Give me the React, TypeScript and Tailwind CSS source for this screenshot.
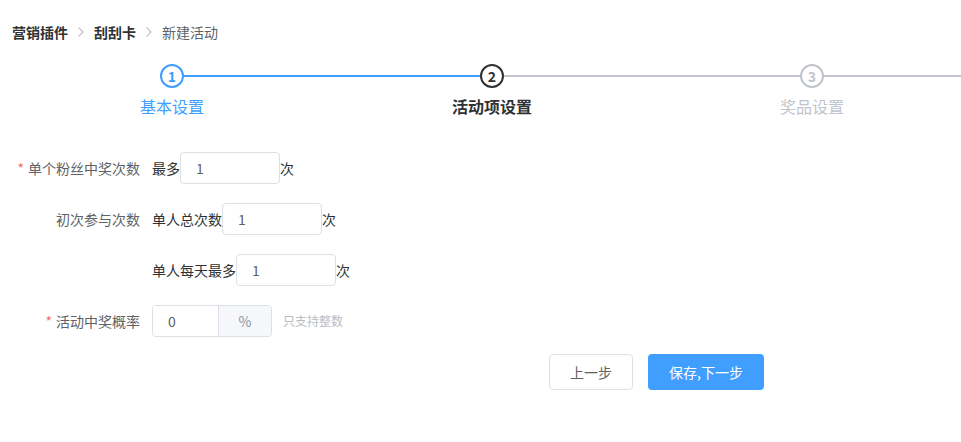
const font = { fontFamily: '"Noto Sans CJK SC", "Noto Sans", sans-serif' };

type Step = { n: number; title: string; state: "done" | "active" | "wait" };

const steps: Step[] = [
  { n: 1, title: "基本设置", state: "done" },
  { n: 2, title: "活动项设置", state: "active" },
  { n: 3, title: "奖品设置", state: "wait" },
];

function Chevron() {
  return (
    <svg width="8" height="12" viewBox="0 0 8 12" className="mx-[9px]">
      <path d="M1.5 1.5 L6 6 L1.5 10.5" fill="none" stroke="#c0c4cc" strokeWidth="1.3" />
    </svg>
  );
}

function StepItem({ step, prev }: { step: Step; prev?: Step }) {
  const leftColor = !prev ? "bg-transparent" : prev.state === "done" ? "bg-[#409eff]" : "bg-[#c0c4cc]";
  const rightColor = step.state === "done" ? "bg-[#409eff]" : "bg-[#c0c4cc]";
  const circle =
    step.state === "done"
      ? "border-[#409eff] text-[#409eff]"
      : step.state === "active"
        ? "border-[#303133] text-[#303133]"
        : "border-[#c0c4cc] text-[#c0c4cc]";
  const title =
    step.state === "done"
      ? "text-[#409eff]"
      : step.state === "active"
        ? "text-[#303133] font-bold"
        : "text-[#c0c4cc]";
  return (
    <div className="w-[320px] shrink-0 flex flex-col items-center">
      <div className="flex items-center w-full h-6">
        <div className={`flex-1 h-[2px] ${leftColor}`} />
        <div
          className={`w-6 h-6 rounded-full border-2 flex items-center justify-center text-[14px] font-bold leading-none bg-white ${circle}`}
        >
          {step.n}
        </div>
        <div className={`flex-1 h-[2px] ${rightColor}`} />
      </div>
      <div className={`mt-[6px] text-[16px] leading-6 ${title}`}>{step.title}</div>
    </div>
  );
}

function Label({ text, required }: { text: string; required?: boolean }) {
  return (
    <div className="w-[152px] shrink-0 pr-3 text-right text-[14px] text-[#606266]">
      {required && <span className="text-[#f56c6c] mr-1">*</span>}
      {text}
    </div>
  );
}

function NumInput({ value }: { value: string }) {
  return (
    <div className="w-[100px] h-8 border border-[#dcdfe6] rounded-[4px] flex items-center pl-[15px] text-[14px] text-[#606266] bg-white">
      {value}
    </div>
  );
}

export default function App() {
  return (
    <div className="w-[961px] h-[442px] bg-white overflow-hidden" style={font}>
      <div className="flex items-center h-5 mt-[22px] ml-3 text-[14px] leading-5">
        <span className="font-bold text-[#303133]">营销插件</span>
        <Chevron />
        <span className="font-bold text-[#303133]">刮刮卡</span>
        <Chevron />
        <span className="text-[#606266]">新建活动</span>
      </div>

      <div className="flex ml-3 mt-[22px] w-[960px]">
        {steps.map((s, i) => (
          <StepItem key={s.n} step={s} prev={steps[i - 1]} />
        ))}
      </div>

      <div className="mt-[34px] flex flex-col gap-[19px]">
        <div className="flex items-center h-8">
          <Label text="单个粉丝中奖次数" required />
          <span className="text-[14px] text-[#303133]">最多</span>
          <NumInput value="1" />
          <span className="text-[14px] text-[#303133]">次</span>
        </div>
        <div className="flex items-center h-8">
          <Label text="初次参与次数" />
          <span className="text-[14px] text-[#303133]">单人总次数</span>
          <NumInput value="1" />
          <span className="text-[14px] text-[#303133]">次</span>
        </div>
        <div className="flex items-center h-8">
          <Label text="" />
          <span className="text-[14px] text-[#303133]">单人每天最多</span>
          <NumInput value="1" />
          <span className="text-[14px] text-[#303133]">次</span>
        </div>
        <div className="flex items-center h-8">
          <Label text="活动中奖概率" required />
          <div className="flex h-8 border border-[#dcdfe6] rounded-[4px] overflow-hidden">
            <div className="w-[65px] flex items-center pl-[15px] text-[14px] text-[#606266] bg-white">0</div>
            <div className="w-[53px] flex items-center justify-center border-l border-[#dcdfe6] bg-[#f5f7fa] text-[14px] text-[#909399]">
              %
            </div>
          </div>
          <span className="ml-[11px] text-[12px] text-[#b9bcc2]">只支持整数</span>
        </div>
      </div>

      <div className="flex gap-[15px] ml-[549px] mt-[17px]">
        <button className="w-[84px] h-[36px] border border-[#dcdfe6] rounded-[4px] bg-white text-[14px] text-[#606266]">
          上一步
        </button>
        <button className="w-[116px] h-[36px] rounded-[4px] bg-[#409eff] text-[14px] text-white">
          保存,下一步
        </button>
      </div>
    </div>
  );
}
